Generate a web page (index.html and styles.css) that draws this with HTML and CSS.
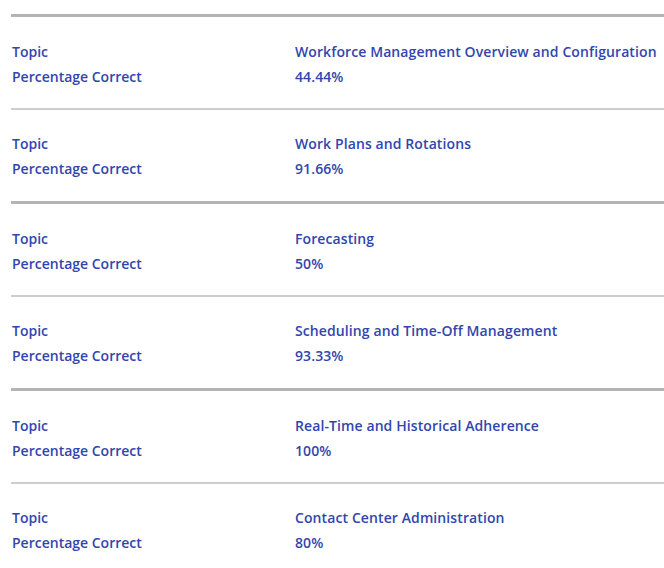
FILE: index.html
```html
<!DOCTYPE html>
<html>
<head>
<meta charset="utf-8">
<link rel="stylesheet" href="styles.css">
</head>
<body>
<div class="list">
  <div class="row thick">
    <div class="label">Topic</div><div class="value">Workforce Management Overview and Configuration</div>
    <div class="label">Percentage Correct</div><div class="value">44.44%</div>
  </div>
  <div class="row thin">
    <div class="label">Topic</div><div class="value">Work Plans and Rotations</div>
    <div class="label">Percentage Correct</div><div class="value">91.66%</div>
  </div>
  <div class="row thick">
    <div class="label">Topic</div><div class="value">Forecasting</div>
    <div class="label">Percentage Correct</div><div class="value">50%</div>
  </div>
  <div class="row thin">
    <div class="label">Topic</div><div class="value">Scheduling and Time-Off Management</div>
    <div class="label">Percentage Correct</div><div class="value">93.33%</div>
  </div>
  <div class="row thick">
    <div class="label">Topic</div><div class="value">Real-Time and Historical Adherence</div>
    <div class="label">Percentage Correct</div><div class="value">100%</div>
  </div>
  <div class="row thin">
    <div class="label">Topic</div><div class="value">Contact Center Administration</div>
    <div class="label">Percentage Correct</div><div class="value">80%</div>
  </div>
</div>
</body>
</html>
```
FILE: styles.css
```css
html, body {
  margin: 0;
  padding: 0;
  background: #ffffff;
}
body {
  font-family: "Open Sans", "Noto Sans", sans-serif;
  font-size: 14px;
  font-weight: 600;
  color: #3146ad;
}
.list {
  padding-top: 14px;
  padding-left: 11px;
}
.row {
  display: grid;
  grid-template-columns: 284px 1fr;
  line-height: 25px;
  padding-top: 21.5px;
  padding-bottom: 19.5px;
}
.row.thick {
  border-top: 3px solid #b4b4b4;
}
.row.thin {
  border-top: 2px solid #cdcdcd;
  padding-top: 21.1px;
  padding-bottom: 20px;
}
.label {
  padding-left: 1px;
  white-space: nowrap;
}
.value {
  white-space: nowrap;
  letter-spacing: 0.1px;
}
```
